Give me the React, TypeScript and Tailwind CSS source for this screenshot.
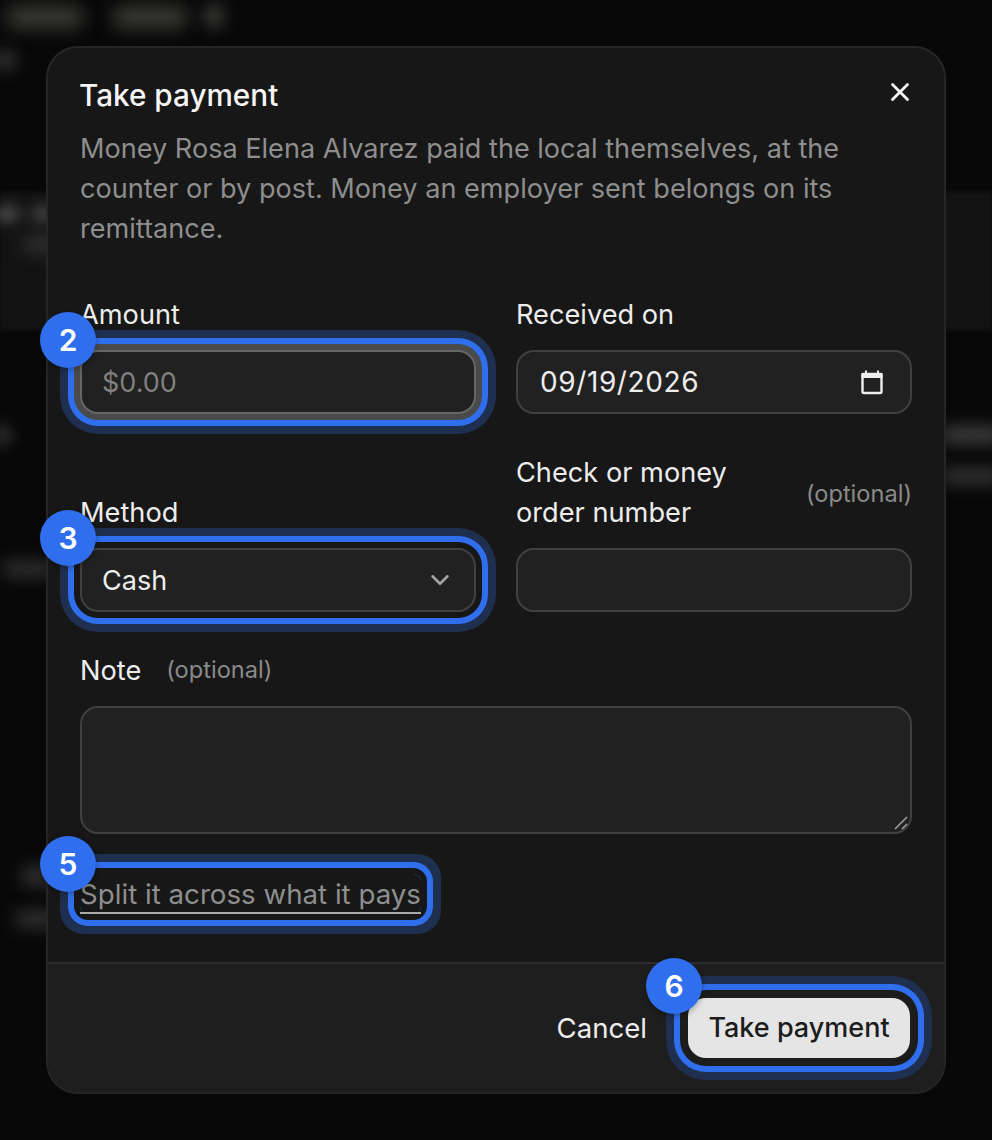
import { ChevronDown, X } from "lucide-react";

const FIELD_RING = "shadow-[0_0_0_6px_#171717,0_0_0_12px_#2f6fed,0_0_0_20px_#1f2f50]";

function Badge({ n, className }: { n: number; className: string }) {
  return (
    <span
      className={`absolute z-10 flex h-[56px] w-[56px] items-center justify-center rounded-full bg-[#2f6fed] text-[30px] font-semibold text-white shadow-[0_2px_6px_rgba(0,0,0,0.3)] ${className}`}
    >
      {n}
    </span>
  );
}

function Backdrop() {
  return (
    <div className="absolute inset-0 overflow-hidden bg-[#080808]">
      <div className="absolute left-0 top-[192px] h-[138px] w-full bg-[#131313] blur-[2px]" />
      <div className="absolute left-[6px] top-[6px] h-[22px] w-[78px] rounded-full bg-[#3a3a37] blur-[9px]" />
      <div className="absolute left-[112px] top-[6px] h-[22px] w-[76px] rounded-full bg-[#3a3a37] blur-[9px]" />
      <div className="absolute left-[203px] top-[4px] h-[24px] w-[22px] rounded-full bg-[#383836] blur-[8px]" />
      <div className="absolute left-[-10px] top-[50px] h-[20px] w-[28px] rounded-full bg-[#2e2e2e] blur-[8px]" />
      <div className="absolute left-[-6px] top-[206px] h-[16px] w-[26px] rounded-full bg-[#4a4a4a] blur-[7px]" />
      <div className="absolute left-[30px] top-[206px] h-[16px] w-[30px] rounded-full bg-[#404040] blur-[7px]" />
      <div className="absolute left-[22px] top-[234px] h-[20px] w-[40px] rounded-full bg-[#2c2c2c] blur-[8px]" />
      <div className="absolute left-[-8px] top-[424px] h-[22px] w-[20px] rounded-full bg-[#2c2c2c] blur-[7px]" />
      <div className="absolute left-[2px] top-[560px] h-[18px] w-[54px] rounded-full bg-[#2c2c2c] blur-[8px]" />
      <div className="absolute left-[20px] top-[866px] h-[20px] w-[44px] rounded-full bg-[#2e2e2e] blur-[8px]" />
      <div className="absolute left-[14px] top-[910px] h-[18px] w-[48px] rounded-full bg-[#2e2e2e] blur-[8px]" />
      <div className="absolute left-[940px] top-[426px] h-[18px] w-[64px] rounded-full bg-[#3c3c3c] blur-[8px]" />
      <div className="absolute left-[940px] top-[468px] h-[16px] w-[64px] rounded-full bg-[#333333] blur-[8px]" />
    </div>
  );
}

export default function App() {
  const inputBase =
    "h-[64px] w-full rounded-[18px] border-2 bg-[#212121] px-[20px] text-[27px] text-[#ededed] outline-none";
  const labelText = "translate-y-[1px] text-[27.2px] leading-[40px] text-[#ededed]";

  return (
    <div className="relative h-[1140px] w-[992px] overflow-hidden font-['Inter',sans-serif]">
      <Backdrop />
      <div className="relative pl-[46px] pt-[46px]">
        <div className="flex h-[1048px] w-[900px] flex-col rounded-[32px] border-2 border-[#262626] bg-[#171717]">
          <div className="relative flex-1 px-[32px] pt-[25px]">
            <h2 className="ml-[-1px] text-[29.7px] font-medium leading-[44px] text-[#f5f5f5]">Take payment</h2>
            <button className="absolute right-[29px] top-[29px] text-[#f0f0f0]">
              <X size={30} strokeWidth={2.3} />
            </button>
            <p className="mt-[12px] w-[800px] text-[27.1px] leading-[40px] text-[#8e8e8e]">
              Money Rosa Elena Alvarez paid the local themselves, at the counter or by post. Money an employer sent belongs on its remittance.
            </p>

            <div className="mt-[45px] grid grid-cols-2 gap-x-[40px] gap-y-[38px]">
              <div className="relative flex flex-col justify-end gap-[16px]">
                <label className={labelText}>Amount</label>
                <div className="relative">
                  <Badge n={2} className="left-[-40px] top-[-38px]" />
                  <input
                    placeholder="$0.00"
                    className={`${inputBase} border-[#666] shadow-[0_0_0_6px_#4a4a4a,0_0_0_12px_#2f6fed,0_0_0_20px_#1f2f50] placeholder:text-[#808080]`}
                  />
                </div>
              </div>
              <div className="flex flex-col justify-end gap-[16px]">
                <label className={labelText}>Received on</label>
                <div className="flex h-[64px] items-center justify-between rounded-[18px] border-2 border-[#404040] bg-[#212121] pl-[22px] pr-[26px] text-[28px] tracking-[0.6px] text-[#ededed]">
                  <span>09/19/2026</span>
                  <svg width="24" height="26" viewBox="0 0 24 26" fill="none" className="text-[#f0f0f0]">
                    <path d="M2.5 6.5a1.5 1.5 0 0 1 1.5-1.5h16a1.5 1.5 0 0 1 1.5 1.5v16a1.5 1.5 0 0 1-1.5 1.5H4a1.5 1.5 0 0 1-1.5-1.5z" stroke="currentColor" strokeWidth="2.4" />
                    <path d="M2.5 5h19v3h-19zM6 1.5V5M18 1.5V5" fill="currentColor" stroke="currentColor" strokeWidth="2" />
                  </svg>
                </div>
              </div>

              <div className="flex flex-col justify-end gap-[16px]">
                <label className={labelText}>Method</label>
                <div className="relative">
                  <Badge n={3} className="left-[-40px] top-[-38px]" />
                  <div className={`flex h-[64px] items-center justify-between rounded-[18px] border-2 border-[#404040] bg-[#212121] pl-[20px] pr-[19px] text-[27px] text-[#ededed] ${FIELD_RING}`}>
                    <span className="translate-y-[1px]">Cash</span>
                    <ChevronDown size={30} strokeWidth={2} className="text-[#a3a3a3]" />
                  </div>
                </div>
              </div>
              <div className="flex flex-col justify-end gap-[16px]">
                <div className="flex items-center justify-between">
                  <label className={`w-[230px] ${labelText}`}>Check or money order number</label>
                  <span className="translate-y-[2px] text-[23.6px] text-[#8a8a8a]">(optional)</span>
                </div>
                <input className={`${inputBase} border-[#404040]`} />
              </div>
            </div>

            <div className="mt-[38px] flex flex-col gap-[16px]">
              <div className="flex items-center gap-[25px]">
                <label className={labelText}>Note</label>
                <span className="text-[23.6px] text-[#8a8a8a]">(optional)</span>
              </div>
              <div className="relative">
                <textarea className="block h-[128px] w-full resize-none rounded-[18px] border-2 border-[#404040] bg-[#212121] outline-none" />
                <svg width="14" height="14" viewBox="0 0 14 14" className="absolute bottom-[4px] right-[4px] text-[#a3a3a3]">
                  <path d="M1 13 13 1M8 13l5-5" stroke="currentColor" strokeWidth="1.5" />
                </svg>
              </div>
            </div>

            <div className="mt-[40px] flex">
              <div className={`relative rounded-[8px] ${FIELD_RING}`}>
                <Badge n={5} className="left-[-40px] top-[-38px]" />
                <a className="block h-[40px] border-b-2 border-[#aaaaaa] text-[27.7px] leading-[40px] text-[#8e8e8e]">
                  Split it across what it pays
                </a>
              </div>
            </div>
          </div>

          <div className="flex h-[130px] items-center justify-end gap-[41px] rounded-b-[30px] border-t-2 border-[#2c2c2c] bg-[#1e1e1e] pr-[34px]">
            <button className="translate-y-[1px] text-[27.6px] text-[#ededed]">Cancel</button>
            <div className="relative">
              <Badge n={6} className="left-[-42px] top-[-40px]" />
              <button className="h-[60px] w-[222px] rounded-[18px] bg-[#e5e5e5] text-[27px] font-medium text-[#1c1c1c] shadow-[0_0_0_8px_#1c1c1c,0_0_0_14px_#2f6fed,0_0_0_22px_#1f2f50]">
                Take payment
              </button>
            </div>
          </div>
        </div>
      </div>
    </div>
  );
}
